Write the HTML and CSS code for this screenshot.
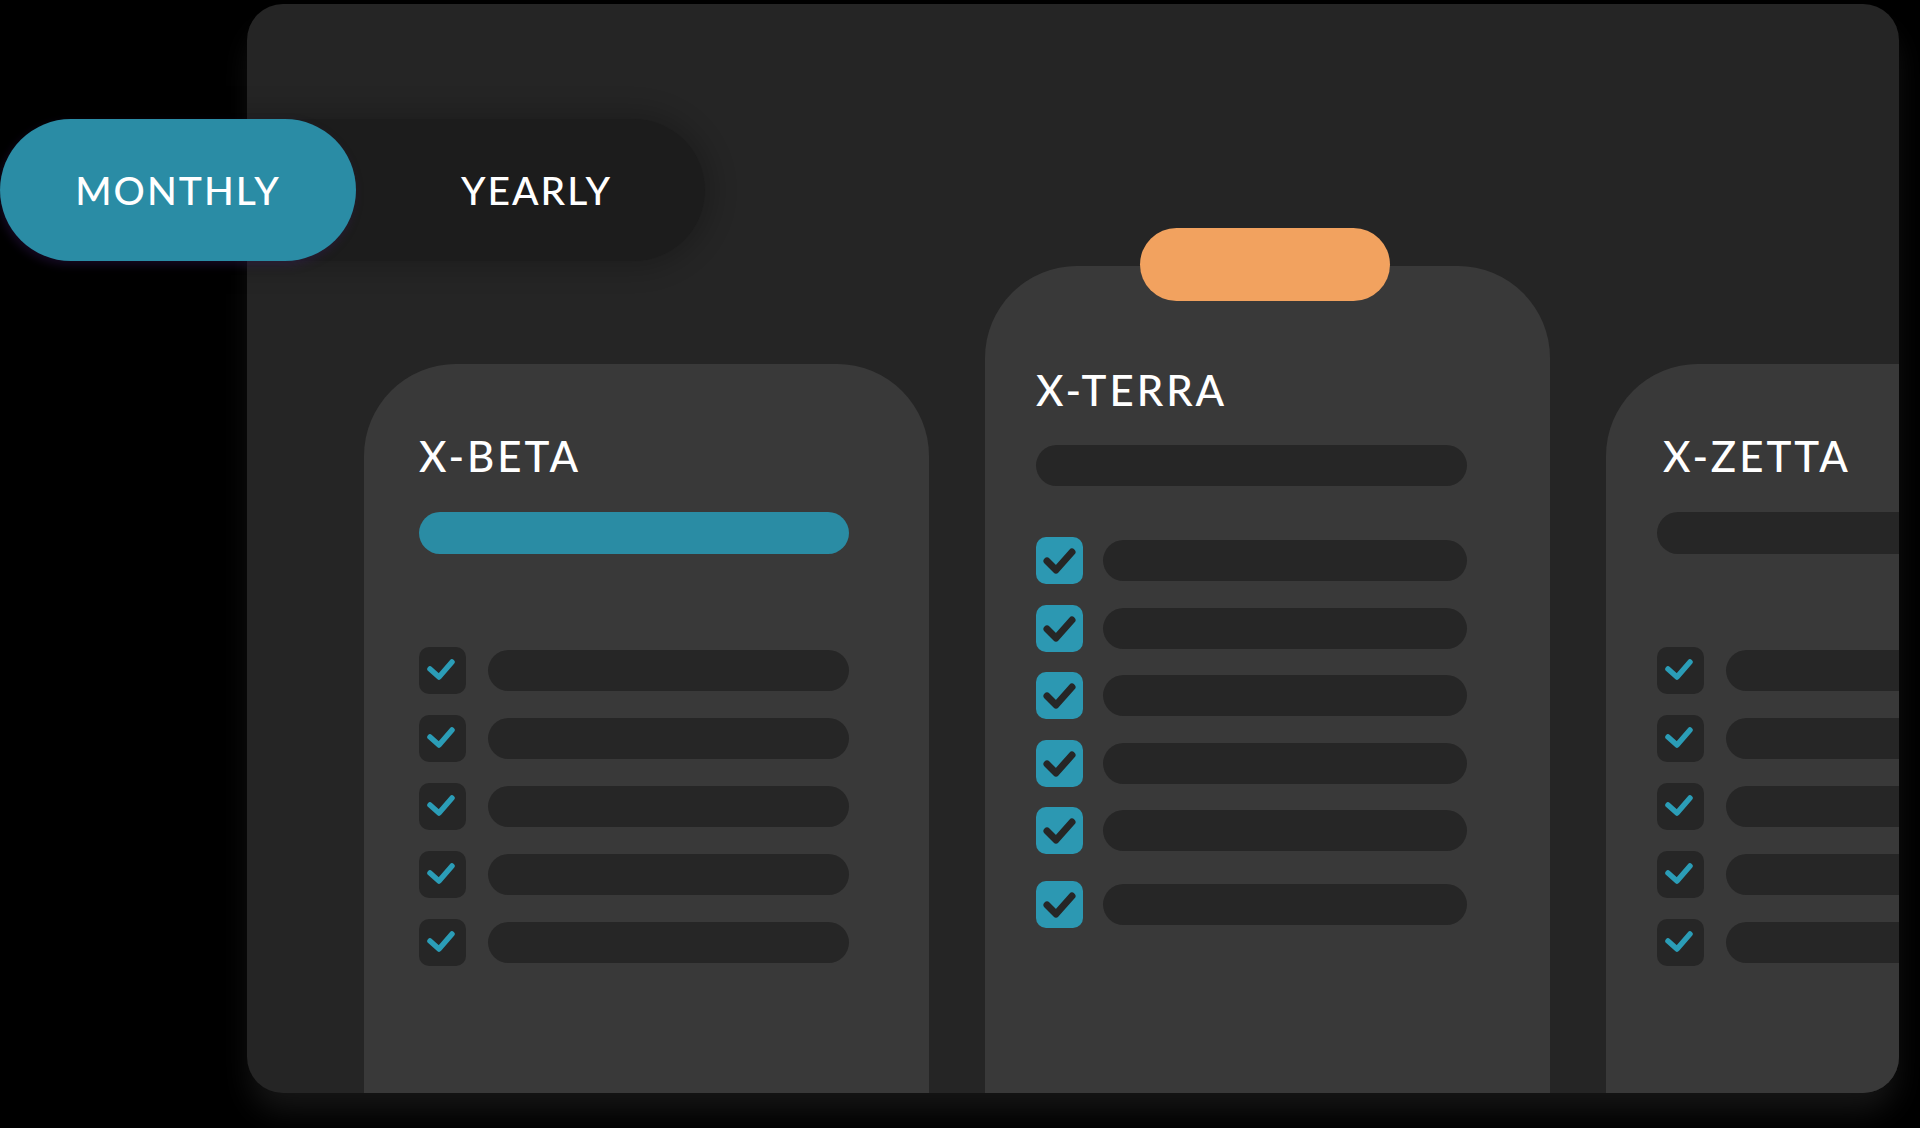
FILE: index.html
```html
<!DOCTYPE html>
<html lang="en">
<head>
<meta charset="utf-8">
<title>Pricing plans</title>
<link rel="stylesheet" href="styles.css">
</head>
<body>
<div class="scene">
  <div class="panel">
    <div class="cards">
      <section class="card card-beta">
        <h2 class="title">X-BETA</h2>
        <div class="price price-active"></div>
        <ul class="features">
          <li class="row"><span class="box box-dark"><svg viewBox="0 0 47 47"><polyline points="11,22 20,30 33,15"/></svg></span><span class="line"></span></li>
          <li class="row"><span class="box box-dark"><svg viewBox="0 0 47 47"><polyline points="11,22 20,30 33,15"/></svg></span><span class="line"></span></li>
          <li class="row"><span class="box box-dark"><svg viewBox="0 0 47 47"><polyline points="11,22 20,30 33,15"/></svg></span><span class="line"></span></li>
          <li class="row"><span class="box box-dark"><svg viewBox="0 0 47 47"><polyline points="11,22 20,30 33,15"/></svg></span><span class="line"></span></li>
          <li class="row"><span class="box box-dark"><svg viewBox="0 0 47 47"><polyline points="11,22 20,30 33,15"/></svg></span><span class="line"></span></li>
        </ul>
      </section>
      <section class="card card-terra">
        <div class="badge"></div>
        <h2 class="title">X-TERRA</h2>
        <div class="price"></div>
        <ul class="features">
          <li class="row"><span class="box box-teal"><svg viewBox="0 0 47 47"><polyline points="11,24 20,33 36,15"/></svg></span><span class="line"></span></li>
          <li class="row"><span class="box box-teal"><svg viewBox="0 0 47 47"><polyline points="11,24 20,33 36,15"/></svg></span><span class="line"></span></li>
          <li class="row"><span class="box box-teal"><svg viewBox="0 0 47 47"><polyline points="11,24 20,33 36,15"/></svg></span><span class="line"></span></li>
          <li class="row"><span class="box box-teal"><svg viewBox="0 0 47 47"><polyline points="11,24 20,33 36,15"/></svg></span><span class="line"></span></li>
          <li class="row"><span class="box box-teal"><svg viewBox="0 0 47 47"><polyline points="11,24 20,33 36,15"/></svg></span><span class="line"></span></li>
          <li class="row row-last"><span class="box box-teal"><svg viewBox="0 0 47 47"><polyline points="11,24 20,33 36,15"/></svg></span><span class="line"></span></li>
        </ul>
      </section>
      <section class="card card-zetta">
        <h2 class="title">X-ZETTA</h2>
        <div class="price"></div>
        <ul class="features">
          <li class="row"><span class="box box-dark"><svg viewBox="0 0 47 47"><polyline points="11,22 20,30 33,15"/></svg></span><span class="line"></span></li>
          <li class="row"><span class="box box-dark"><svg viewBox="0 0 47 47"><polyline points="11,22 20,30 33,15"/></svg></span><span class="line"></span></li>
          <li class="row"><span class="box box-dark"><svg viewBox="0 0 47 47"><polyline points="11,22 20,30 33,15"/></svg></span><span class="line"></span></li>
          <li class="row"><span class="box box-dark"><svg viewBox="0 0 47 47"><polyline points="11,22 20,30 33,15"/></svg></span><span class="line"></span></li>
          <li class="row"><span class="box box-dark"><svg viewBox="0 0 47 47"><polyline points="11,22 20,30 33,15"/></svg></span><span class="line"></span></li>
        </ul>
      </section>
    </div>
  </div>
  <div class="toggle">
    <span class="opt opt-active">MONTHLY</span>
    <span class="opt opt-yearly">YEARLY</span>
  </div>
</div>
</body>
</html>
```

FILE: styles.css
```css
* { box-sizing: border-box; }

html, body {
  margin: 0;
  padding: 0;
  background: #000;
}

body {
  font-family: "Lato", "Inter", "DejaVu Sans", sans-serif;
  color: #fff;
}

.scene {
  position: relative;
  width: 1920px;
  height: 1128px;
  padding: 4px 0 0 247px;
  overflow: hidden;
  background: #000;
}

.panel {
  width: 1652px;
  height: 1089px;
  background: #252525;
  border-radius: 36px;
  overflow: hidden;
  box-shadow: 0 22px 30px -4px rgba(48, 48, 48, 0.45);
}

.cards {
  display: flex;
  align-items: flex-start;
  gap: 56px;
  padding-left: 117px;
}

.card {
  position: relative;
  flex: 0 0 565px;
  width: 565px;
  height: 1000px;
  background: #393939;
  border-radius: 92px 92px 0 0;
  padding: 71px 80px 0 55px;
}

.card-beta { margin-top: 360px; }
.card-terra { margin-top: 262px; padding: 103px 83px 0 51px; }
.card-zetta { margin-top: 360px; padding-left: 51px; }

.title {
  margin: 0;
  font-size: 42px;
  line-height: 42px;
  font-weight: 500;
  letter-spacing: 3px;
  color: #fff;
}

.card-zetta .title { margin-left: 6px; }

.price {
  height: 42px;
  margin-top: 35px;
  border-radius: 21px;
  background: #262626;
}

.card-terra .price { margin-top: 34px; height: 41px; }

.price-active { background: #2a8ca4; }

.features {
  list-style: none;
  margin: 93px 0 0;
  padding: 0;
  display: flex;
  flex-direction: column;
  gap: 21px;
}

.card-terra .features {
  margin-top: 51px;
  gap: 20.5px;
}

.row {
  display: flex;
  align-items: center;
  height: 47px;
}

.row-last { margin-top: 6px; }

.box {
  flex: 0 0 47px;
  width: 47px;
  height: 47px;
  border-radius: 10px;
  display: flex;
}

.box svg {
  width: 47px;
  height: 47px;
  fill: none;
  stroke-linecap: round;
  stroke-linejoin: round;
}

.box-dark { background: #262626; }
.box-dark svg polyline { stroke: #2b9db7; stroke-width: 5.5; }

.box-teal { background: #2c98b2; }
.box-teal svg polyline { stroke: #262626; stroke-width: 7; }

.line {
  flex: 1;
  height: 41px;
  margin-left: 22px;
  border-radius: 21px;
  background: #262626;
}

.card-terra .line { margin-left: 20px; }

.badge {
  position: absolute;
  top: -38px;
  left: 50%;
  margin-left: -128px;
  width: 250px;
  height: 73px;
  border-radius: 37px;
  background: #f2a25f;
}

.toggle {
  position: absolute;
  left: 0;
  top: 119px;
  width: 705px;
  height: 142px;
  display: flex;
  border-radius: 71px;
  background: rgba(0, 0, 0, 0.24);
  box-shadow: 0 0 26px 8px rgba(0, 0, 0, 0.2);
}

.opt {
  display: flex;
  align-items: center;
  justify-content: center;
  height: 142px;
  font-size: 39px;
  font-weight: 500;
  letter-spacing: 2px;
  color: #fff;
}

.opt-active {
  flex: 0 0 356px;
  border-radius: 71px;
  background: #2a8ca5;
  box-shadow: -2px 4px 10px rgba(60, 30, 100, 0.35);
}

.opt-yearly {
  flex: 1;
  padding-left: 12px;
}
```
